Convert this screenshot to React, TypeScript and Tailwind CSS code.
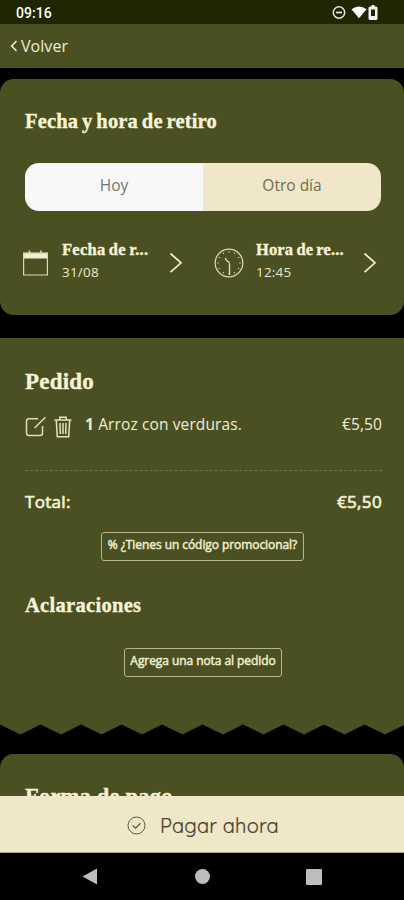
import React from "react";

const serif =
  "font-['Liberation_Serif','Tinos',serif] font-bold text-[#f6f3d9] whitespace-nowrap [-webkit-text-stroke:0.35px_#f6f3d9]";
const sans = "font-['Open_Sans','Noto_Sans',sans-serif] whitespace-nowrap";

function StatusBar() {
  return (
    <div className="flex h-6 shrink-0 items-center justify-between bg-[#202502] pl-4 pr-[25px]">
      <span className="font-[Roboto,sans-serif] text-[14px] font-medium leading-6 tracking-[0.05px] text-white">
        <span className="relative top-px">09:16</span>
      </span>
      <svg width="49" height="18" viewBox="0 0 49 18" fill="none">
        <circle cx="9" cy="9.5" r="5.7" stroke="#e6e6e0" strokeWidth="1.5" />
        <path d="M6 9.5h6" stroke="#e6e6e0" strokeWidth="1.7" />
        <path d="M21.5 6.2Q29 .8 36.500 6.200L29 15.300Z" fill="#fff" />
        <path d="M40 3.500h1.500V2h3v1.500H46q1.500 0 1.500 1.500v10.500q0 1.500-1.500 1.500h-6q-1.500 0-1.500-1.500V5q0-1.500 1.500-1.500Z" fill="#f1f1ed" />
        <path d="M41 6.500h4v6.500h-4Z" fill="#202502" />
      </svg>
    </div>
  );
}

function Chevron() {
  return (
    <svg className="shrink-0" width="14" height="22" viewBox="0 0 14 22" fill="none">
      <path d="m1.500 1.500 10.500 9.300L1.500 20.200" stroke="#f0edcf" strokeWidth="1.7" />
    </svg>
  );
}

function CalendarIcon() {
  return (
    <svg width="26" height="26" viewBox="0 0 26 26" fill="none" stroke="#dad8b5">
      <path d="M1 2.500h25v6H1Z" fill="#f1edce" stroke="none" />
      <path d="M1.600 3.500h23.800v21.500H1.600Z" strokeWidth="1.200" />
      <path d="M7.500 .5v3M19 .5v3" strokeWidth="1.500" />
    </svg>
  );
}

function ClockIcon() {
  const ticks = Array.from({ length: 12 }, (_, i) => i * 30);
  return (
    <svg className="-ml-0.5" width="30" height="30" viewBox="0 0 30 30" fill="none" stroke="#dad8b5">
      <circle cx="15" cy="15" r="13.800" strokeWidth="1.200" />
      {ticks.map((a) => (
        <path key={a} d="M15 3.200v1.500" strokeWidth="1" transform={`rotate(${a} 15 15)`} />
      ))}
      <path d="m11 10.200 2.400 3.200M15.500 16.500v10.500" strokeWidth="1.400" />
      <path d="M13 13.500q2.700-.5 2.500 3.500" strokeWidth="1.200" />
    </svg>
  );
}

function EditIcon() {
  return (
    <svg width="22" height="22" viewBox="0 0 22 22" fill="none" stroke="#dedbb6" strokeWidth="1.500">
      <path d="M13 2.800H4Q1.500 2.800 1.500 5.300v11.700Q1.500 19.500 4 19.500h11q2.500 0 2.500-2.500V10" />
      <path d="M9.500 12 20.500 1.300" strokeWidth="1.600" />
    </svg>
  );
}

function TrashIcon() {
  return (
    <svg width="18" height="22" viewBox="0 0 18 22" fill="none" stroke="#e5e2bf" strokeWidth="1.500">
      <path d="M.5 4h17M5.800 3.500V1.300h6.400v2.200M2.300 4.500l1 16.200h11.400l1-16.200" />
      <path d="m6 7 .3 11M9 7v11M12 7l-.3 11" />
    </svg>
  );
}

function Picker({ icon, title, value, tight }: { icon: React.ReactNode; title: string; value: string; tight: string }) {
  return (
    <div className="flex h-[50px] items-center">
      <div className="flex w-[40px] shrink-0 items-center">{icon}</div>
      <div className="flex w-[107px] flex-col pb-1">
        <span className={`${serif} ${tight} text-[16.500px] leading-[22px]`}>{title}</span>
        <span className={`${sans} text-[13.500px] leading-[22px] tracking-[0.2px] text-[#ece9cf]`}>{value}</span>
      </div>
      <Chevron />
    </div>
  );
}

function PickupCard() {
  return (
    <section className="h-[236px] shrink-0 rounded-[14px] bg-[#4a5021] pl-[25px] pr-[23px] pt-[28px]">
      <h2 className={`${serif} text-[20.500px] leading-7 tracking-[0.18px] [word-spacing:-1.500px]`}>Fecha y hora de retiro</h2>
      <div className={`${sans} mt-7 grid h-12 grid-cols-2 overflow-hidden rounded-[14px] text-center text-[15.500px] leading-[45px]`}>
        <div className="bg-[#f8f8f8] text-[#74746f]">Hoy</div>
        <div className="bg-[#f0e6c8] text-[#716d50]">Otro día</div>
      </div>
      <div className="-ml-[3px] mt-[27px] flex gap-[33px]">
        <Picker icon={<CalendarIcon />} title="Fecha de r..." value="31/08" tight="tracking-[0.25px] [word-spacing:-1px]" />
        <Picker icon={<ClockIcon />} title="Hora de re..." value="12:45" tight="tracking-[0.12px] [word-spacing:-1px]" />
      </div>
    </section>
  );
}

function OutlineButton({ children, width }: { children: string; width: string }) {
  return (
    <button
      className={`${sans} ${width} block h-[29px] rounded-[3px] border border-[#b4b78b] pb-[3px] text-[12px] leading-6 tracking-[-0.07px] text-[#eeebcb] [-webkit-text-stroke:0.5px_#eeebcb]`}
    >
      {children}
    </button>
  );
}

function OrderSection() {
  return (
    <section className="mt-[23px] h-[386px] shrink-0 bg-[#4a5021] pl-[25px] pr-[22px] pt-[29px]">
      <h2 className={`${serif} text-[23px] leading-[30px] tracking-[0.2px]`}>Pedido</h2>
      <div className={`${sans} mt-[11px] flex h-[34px] items-center text-[15.500px] text-[#efecd5]`}>
        <div className="flex w-[60px] gap-[7px] pt-[3px]">
          <EditIcon />
          <TrashIcon />
        </div>
        <span className="flex-1 tracking-[0.12px]"><b>1</b> Arroz con verduras.</span>
        <span className="tracking-[0.1px]">€5,50</span>
      </div>
      <div className="mt-[28px] border-t border-dashed border-[#6c7247]" />
      <div className={`${sans} mt-[17px] flex justify-between text-[17px] leading-7 text-[#f2efd5] [-webkit-text-stroke:0.7px_#f2efd5]`}>
        <span className="tracking-[0.3px]">Total:</span>
        <span className="tracking-[0.35px]">€5,50</span>
      </div>
      <div className="mt-4 pl-[76px]">
        <OutlineButton width="w-[203px]">% ¿Tienes un código promocional?</OutlineButton>
      </div>
      <h3 className={`${serif} mt-[30px] text-[20.500px] leading-7 tracking-[0.3px]`}>Aclaraciones</h3>
      <div className="mt-[29px] pl-[99px]">
        <OutlineButton width="w-[158px]">Agrega una nota al pedido</OutlineButton>
      </div>
    </section>
  );
}

function TornEdge() {
  const teeth = Array.from({ length: 10 }, (_, i) => `L${i * 40.5 + 20.5} 10.500 L${(i + 1) * 40.5} .5`).join(" ");
  return (
    <svg className="block shrink-0" width="404" height="11" viewBox="0 0 404 11">
      <path d={`M0 0V.5${teeth}V0Z`} fill="#4a5021" />
    </svg>
  );
}

function PayButton() {
  return (
    <button className="flex h-[57px] w-full shrink-0 items-center border-b border-[#aaa48b] bg-[#f0e6c8] pl-[127px] pt-[3px]">
      <svg width="19" height="19" viewBox="0 0 19 19" fill="none" stroke="#5b593f" strokeWidth="1">
        <circle cx="9.500" cy="9.500" r="8.500" />
        <path d="m5.500 9.500 3 2.700 5-5" strokeWidth="1.300" />
      </svg>
      <span className="ml-[14px] pt-px whitespace-nowrap font-[Quicksand,Lato,sans-serif] text-[20px] leading-7 tracking-[0.2px] text-[#45442f] [-webkit-text-stroke:0.2px_#45442f]">
        Pagar ahora
      </span>
    </button>
  );
}

function NavigationBar() {
  return (
    <div className="flex h-[47px] shrink-0 items-center justify-between px-[82px]">
      <svg width="16" height="17" viewBox="0 0 16 17"><path d="M15 .5v16L.5 8.500Z" fill="#bdbdbd" /></svg>
      <div className="size-[15px] rounded-full bg-[#bdbdbd]" />
      <div className="size-4 rounded-[1px] bg-[#bdbdbd]" />
    </div>
  );
}

export default function App() {
  return (
    <main className="flex h-[900px] w-[404px] flex-col overflow-hidden bg-black">
      <StatusBar />
      <header className={`${sans} flex h-11 shrink-0 items-center gap-[3px] bg-[#4a5021] pl-[10px] text-[16px] tracking-[0.05px] text-[#efecd5]`}>
        <svg width="8" height="12" viewBox="0 0 8 12" fill="none"><path d="M6.500 1 1.700 6l4.800 5" stroke="#efecd5" strokeWidth="1.600" /></svg>
        <span>Volver</span>
      </header>
      <div className="h-[11px] shrink-0" />
      <PickupCard />
      <OrderSection />
      <TornEdge />
      <section className="mt-[19px] h-[42px] shrink-0 overflow-hidden rounded-t-[14px] bg-[#4a5021] pl-[25px] pt-[29px]">
        <h2 className={`${serif} text-[22.500px] leading-7 tracking-[0.2px]`}>Forma de pago</h2>
      </section>
      <PayButton />
      <NavigationBar />
    </main>
  );
}
